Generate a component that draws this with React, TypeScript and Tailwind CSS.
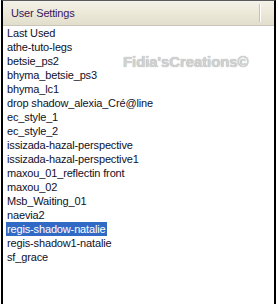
const items = [
  "Last Used",
  "athe-tuto-legs",
  "betsie_ps2",
  "bhyma_betsie_ps3",
  "bhyma_lc1",
  "drop shadow_alexia_Cré@line",
  "ec_style_1",
  "ec_style_2",
  "issizada-hazal-perspective",
  "issizada-hazal-perspective1",
  "maxou_01_reflectin front",
  "maxou_02",
  "Msb_Waiting_01",
  "naevia2",
  "regis-shadow-natalie",
  "regis-shadow1-natalie",
  "sf_grace",
];

const selected = "regis-shadow-natalie";

export default function App() {
  return (
    <div className="w-[278px] h-[304px] bg-white overflow-hidden font-['Liberation_Sans',Arial,sans-serif]">
      <div className="relative ml-[1px] w-[275px] h-[304px] border-l-2 border-r-2 border-t border-l-black border-r-black border-t-[#5a5a5a] bg-white">
        {/* column header */}
        <div className="flex h-[25px] items-stretch border-b border-[#cbc7b8] bg-gradient-to-b from-[#f4f2e9] via-[#ece9d8] to-[#e2decd]">
          <div className="flex w-[256px] items-center pl-[8px] text-[11px] tracking-[-0.2px] text-[#3a1560]">
            User Settings
          </div>
          <div className="my-[3px] flex">
            <div className="w-px bg-[#c7c3b0]" />
            <div className="w-px bg-white" />
          </div>
          <div className="flex-1" />
        </div>

        {/* list */}
        <div className="flex flex-col">
          {items.map((name) => {
            const sel = name === selected;
            return (
              <div key={name} className="flex h-[14px] items-stretch pl-[3px]">
                <span
                  className={`flex items-center whitespace-nowrap px-[1px] text-[11px] leading-none tracking-[-0.15px] ${
                    sel ? "bg-[#316ac5] text-white" : "text-[#10102a]"
                  }`}
                >
                  {name}
                </span>
              </div>
            );
          })}
        </div>

        {/* watermark */}
        <div className="absolute left-[120px] top-[50px] whitespace-nowrap text-[15px] font-bold tracking-[-0.1px] text-[#d2d2d2] [text-shadow:0_0_1px_#9a9a9a]">
          Fidia'sCreations©
        </div>
      </div>
    </div>
  );
}
